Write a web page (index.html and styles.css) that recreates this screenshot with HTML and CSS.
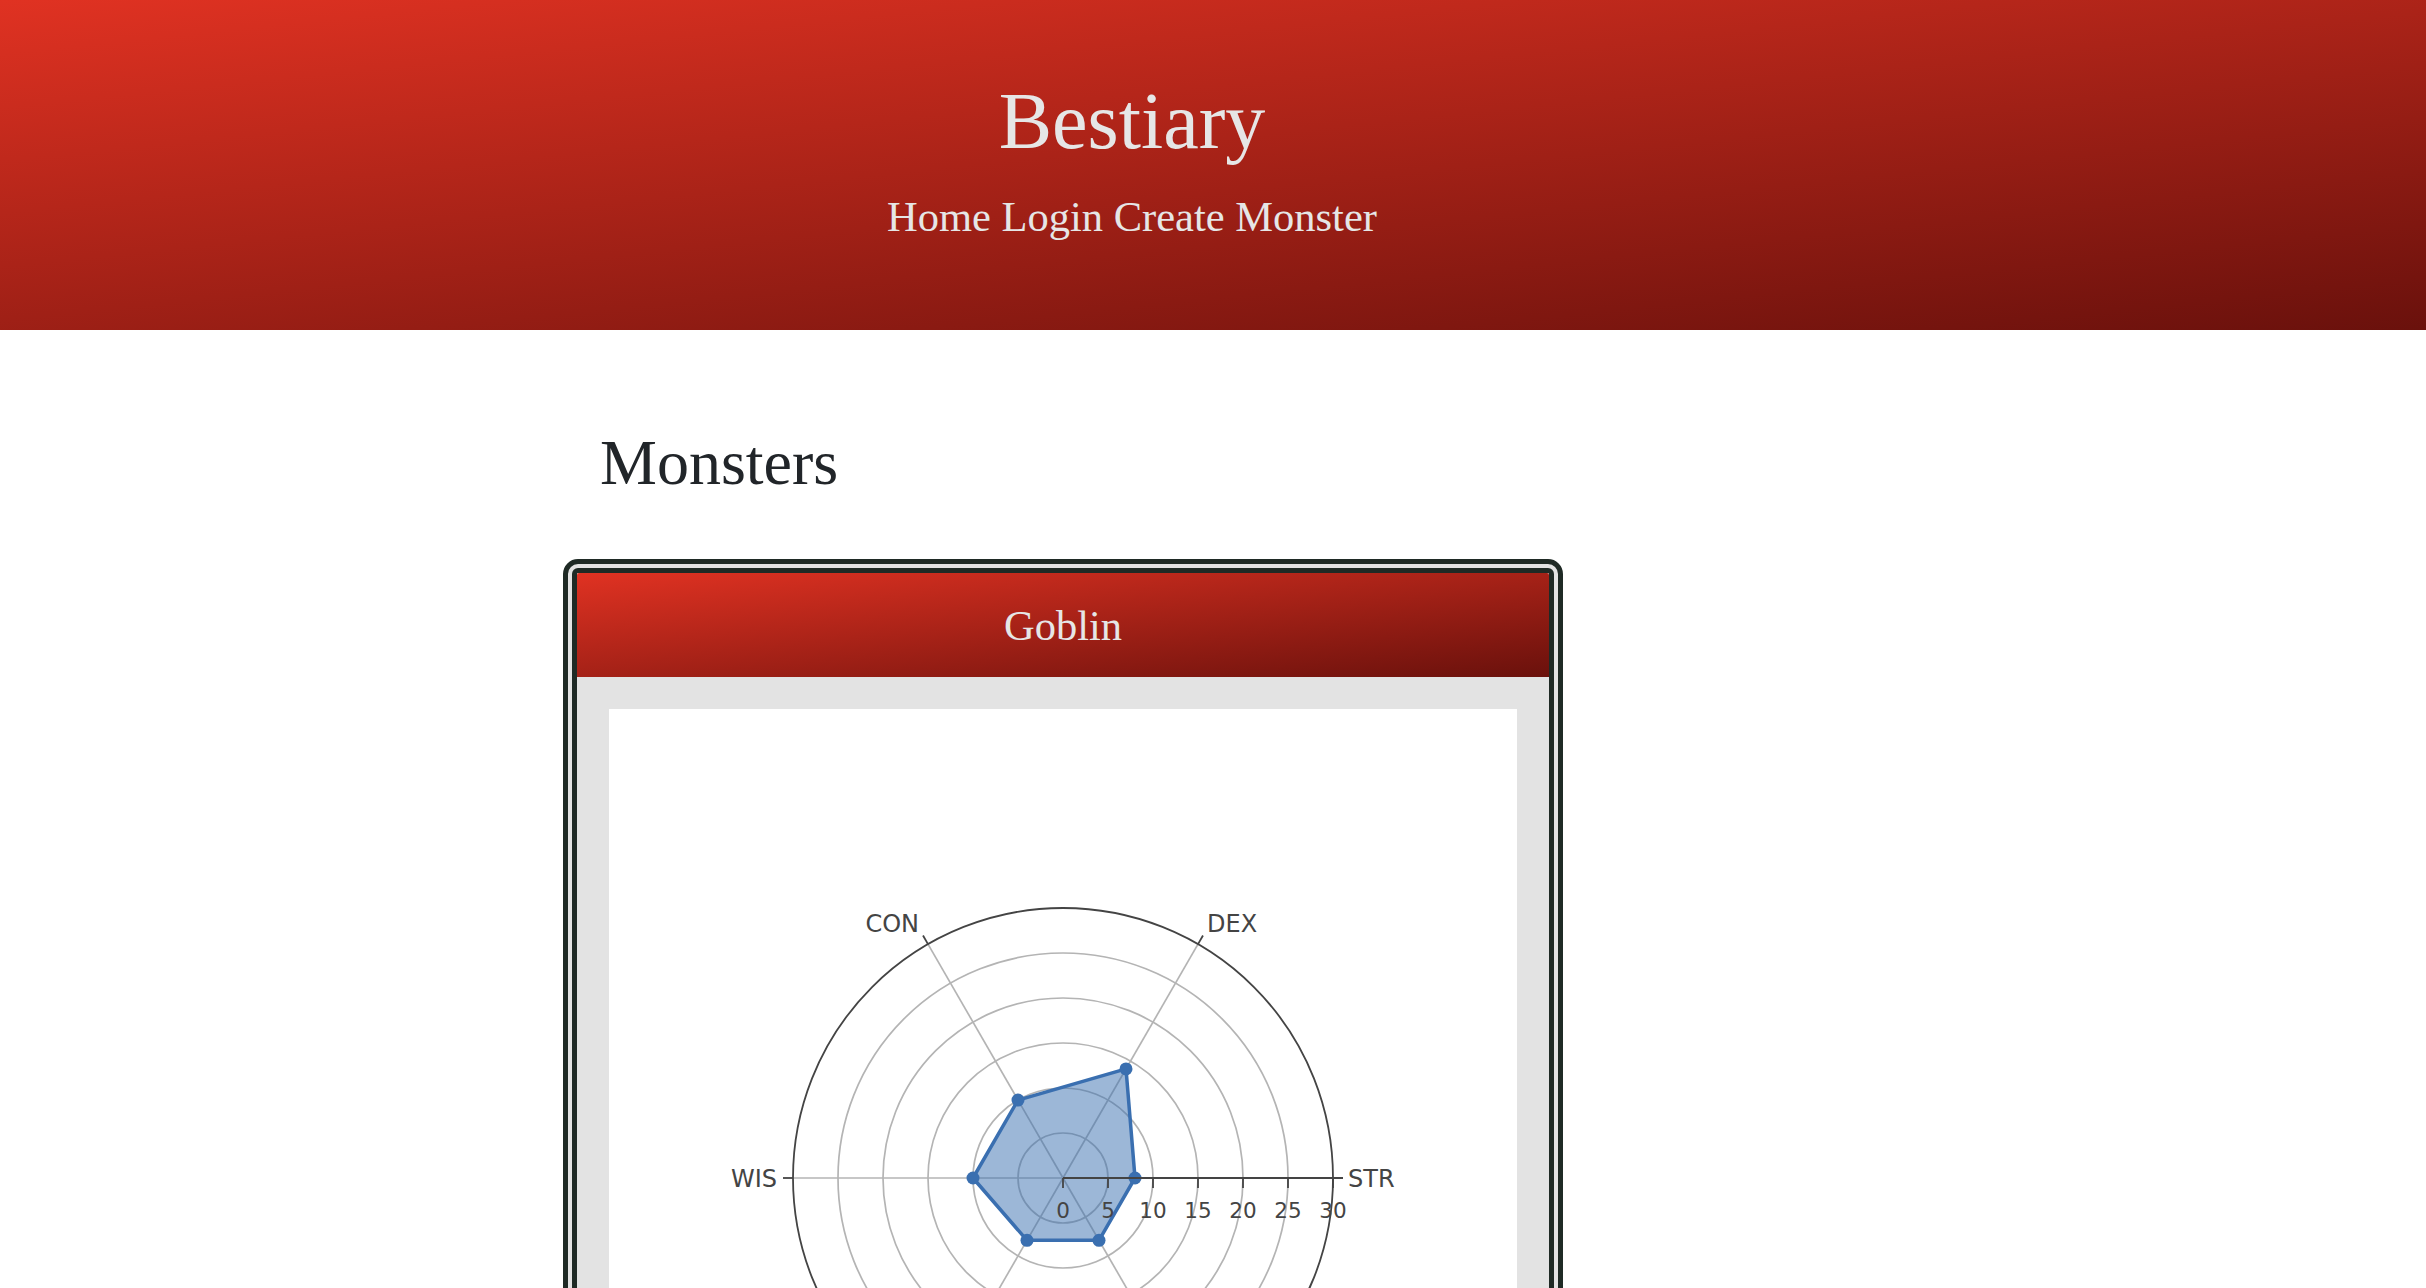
FILE: index.html
```html
<!DOCTYPE html>
<html lang="en">
<head>
<meta charset="utf-8">
<title>Bestiary</title>
<link rel="stylesheet" href="styles.css">
</head>
<body>
<header class="site-header">
  <h1 class="site-title">Bestiary</h1>
  <nav class="site-nav"><a href="#">Home</a> <a href="#">Login</a> <a href="#">Create Monster</a></nav>
</header>
<main class="main">
  <h2 class="page-title">Monsters</h2>
  <section class="card">
    <div class="card-header">Goblin</div>
    <div class="card-body">
      <div class="chart">
        <svg class="chart-svg" width="908" height="940" viewBox="0 0 908 940" xmlns="http://www.w3.org/2000/svg">
          <g class="grid" fill="none" stroke="#b4b4b4" stroke-width="1.7">
            <circle cx="454" cy="469" r="45"/>
            <circle cx="454" cy="469" r="90"/>
            <circle cx="454" cy="469" r="135"/>
            <circle cx="454" cy="469" r="180"/>
            <circle cx="454" cy="469" r="225"/>
            <line x1="454" y1="469" x2="589" y2="235.17"/>
            <line x1="454" y1="469" x2="319" y2="235.17"/>
            <line x1="454" y1="469" x2="184" y2="469"/>
            <line x1="454" y1="469" x2="319" y2="702.83"/>
            <line x1="454" y1="469" x2="589" y2="702.83"/>
          </g>
          <polygon points="526,469 517,359.88 409,391.06 364,469 418,531.35 490,531.35" fill="#3a6fb0" fill-opacity="0.5" stroke="#3a6fb0" stroke-width="3.5" stroke-linejoin="round"/>
          <g fill="#3a6fb0">
            <circle cx="526" cy="469" r="6.5"/>
            <circle cx="517" cy="359.88" r="6.5"/>
            <circle cx="409" cy="391.06" r="6.5"/>
            <circle cx="364" cy="469" r="6.5"/>
            <circle cx="418" cy="531.35" r="6.5"/>
            <circle cx="490" cy="531.35" r="6.5"/>
          </g>
          <g class="axes" fill="none" stroke="#444" stroke-width="1.8">
            <circle cx="454" cy="469" r="270"/>
            <line x1="454" y1="469" x2="734" y2="469" stroke-width="2.2"/>
            <line x1="589" y1="235.17" x2="594" y2="226.51"/>
            <line x1="319" y1="235.17" x2="314" y2="226.51"/>
            <line x1="184" y1="469" x2="174" y2="469"/>
            <line x1="319" y1="702.83" x2="314" y2="711.49"/>
            <line x1="589" y1="702.83" x2="594" y2="711.49"/>
            <line x1="454" y1="469" x2="454" y2="479"/>
            <line x1="499" y1="469" x2="499" y2="479"/>
            <line x1="544" y1="469" x2="544" y2="479"/>
            <line x1="589" y1="469" x2="589" y2="479"/>
            <line x1="634" y1="469" x2="634" y2="479"/>
            <line x1="679" y1="469" x2="679" y2="479"/>
            <line x1="724" y1="469" x2="724" y2="479"/>
          </g>
          <g class="angular-labels" fill="#444" font-family="'DejaVu Sans', Verdana, sans-serif" font-size="24">
            <text x="739" y="478">STR</text>
            <text x="598" y="223">DEX</text>
            <text x="310" y="223" text-anchor="end">CON</text>
            <text x="168" y="478" text-anchor="end">WIS</text>
            <text x="310" y="737" text-anchor="end">INT</text>
            <text x="598" y="737">CHA</text>
          </g>
          <g class="radial-labels" fill="#444" font-family="'DejaVu Sans', Verdana, sans-serif" font-size="21.5" text-anchor="middle">
            <text x="454" y="509">0</text>
            <text x="499" y="509">5</text>
            <text x="544" y="509">10</text>
            <text x="589" y="509">15</text>
            <text x="634" y="509">20</text>
            <text x="679" y="509">25</text>
            <text x="724" y="509">30</text>
          </g>
        </svg>
      </div>
    </div>
  </section>
</main>
</body>
</html>
```

FILE: styles.css
```css
body {
  margin: 0;
  font-family: "Liberation Serif", "Times New Roman", serif;
  color: #212529;
  background: #fff;
}

.site-header {
  box-sizing: border-box;
  height: 330px;
  padding: 81px 162px 0 0;
  text-align: center;
  color: #e6e6e6;
  background: linear-gradient(174deg, #e03222 0%, #6a110c 100%);
}

.site-title {
  margin: 0;
  font-size: 80px;
  font-weight: normal;
  line-height: 1;
}

.site-nav {
  margin-top: 35px;
  font-size: 42.5px;
  line-height: 1;
}

.site-nav a {
  color: inherit;
  text-decoration: none;
}

.main {
  width: 1000px;
  margin-left: 563px;
  padding-top: 101px;
}

.page-title {
  margin: 0 0 64px 37px;
  font-size: 64px;
  font-weight: normal;
  line-height: 1;
}

.card {
  box-sizing: border-box;
  width: 1000px;
  border: 14px double #1f2a25;
  border-radius: 15px;
  background: #e3e3e3;
}

.card-header {
  height: 104px;
  display: flex;
  align-items: center;
  justify-content: center;
  color: #e6e6e6;
  font-size: 42.5px;
  border-radius: 2px 2px 0 0;
  background: linear-gradient(174deg, #e03222 0%, #6a110c 100%);
}

.card-body {
  padding: 32px;
}

.chart {
  background: #fff;
}

.chart-svg {
  display: block;
}
```
